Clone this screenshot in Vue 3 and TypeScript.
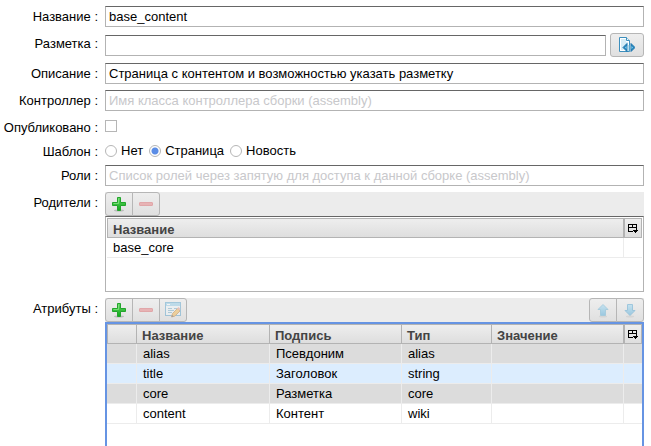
<script setup lang="ts">
import { ref } from 'vue'

interface Attribute {
  name: string
  caption: string
  type: string
  value: string
}

const name = ref('base_content')
const markup = ref('')
const description = ref('Страница с контентом и возможностью указать разметку')
const controller = ref('')
const published = ref(false)
const template = ref('page')
const roles = ref('')
const selected = ref('title')

const templates = [
  { id: 'none', label: 'Нет' },
  { id: 'page', label: 'Страница' },
  { id: 'news', label: 'Новость' },
]

const parents = ref<string[]>(['base_core'])

const attributes = ref<Attribute[]>([
  { name: 'alias', caption: 'Псевдоним', type: 'alias', value: '' },
  { name: 'title', caption: 'Заголовок', type: 'string', value: '' },
  { name: 'core', caption: 'Разметка', type: 'core', value: '' },
  { name: 'content', caption: 'Контент', type: 'wiki', value: '' },
])
</script>

<template>
  <svg class="defs" aria-hidden="true">
    <defs>
      <linearGradient id="green" x1="0" y1="0" x2="0" y2="1">
        <stop offset="0" stop-color="#5fd45f" />
        <stop offset="1" stop-color="#12a81c" />
      </linearGradient>
      <linearGradient id="blue" x1="0" y1="0" x2="0" y2="1">
        <stop offset="0" stop-color="#8fd6f5" />
        <stop offset="1" stop-color="#2f9fdb" />
      </linearGradient>
      <symbol id="plus" viewBox="0 0 16 16">
        <ellipse cx="8" cy="14.5" rx="5" ry="1" fill="#000" opacity=".18" />
        <path d="M6.5 1.5h3v5h5v3h-5v5h-3v-5h-5v-3h5z" fill="url(#green)" stroke="#22a52c" stroke-linejoin="round" />
        <path d="M7.5 2.5v5h-5" fill="none" stroke="#8fe88c" opacity=".7" />
      </symbol>
      <symbol id="minus" viewBox="0 0 16 16">
        <rect x="1.5" y="6.5" width="13" height="3" rx=".5" fill="#e9686c" stroke="#d9484e" />
      </symbol>
      <symbol id="arrow-up" viewBox="0 0 16 16">
        <ellipse cx="8" cy="14.5" rx="4" ry="1" fill="#000" opacity=".15" />
        <path d="M8 2.5l5 5h-2.5v6h-5v-6H3z" fill="url(#blue)" stroke="#4aa6d2" stroke-linejoin="round" />
      </symbol>
      <symbol id="arrow-down" viewBox="0 0 16 16">
        <ellipse cx="8" cy="14.5" rx="4" ry="1" fill="#000" opacity=".15" />
        <path d="M8 13.5l5-5h-2.5v-6h-5v6H3z" fill="url(#blue)" stroke="#2f94cc" stroke-linejoin="round" />
      </symbol>
      <symbol id="picker" viewBox="0 0 10 10">
        <path d="M0 0h9v1H0zM0 3h9v1H0zM0 0h1v8H0zM4 0h1v4H4zM8 0h1v6H8zM0 7h5v1H0zM5 6h5v1H5zM6 7h3v1H6zM7 8h1v1H7z" fill="#000" shape-rendering="crispEdges" />
      </symbol>
    </defs>
  </svg>

  <form class="form" @submit.prevent>
    <div class="field">
      <label class="label" for="name">Название :</label>
      <input id="name" v-model="name" class="text" type="text">
    </div>
    <div class="field">
      <label class="label" for="markup">Разметка :</label>
      <div class="with-button">
        <input id="markup" v-model="markup" class="text" type="text">
        <button class="button code" type="button" aria-label="Разметка">
          <svg class="icon" viewBox="0 0 16 16">
            <path d="M.5.5h7l3 3v11H.5z" fill="#fff" stroke="#3d8fbd" />
            <path d="M2 2h5v3h2v3L4 13H2z" fill="#d5ecf6" />
            <path d="M7.5.5v3h3" fill="#eaf7fc" stroke="#3d8fbd" />
            <path d="M8 6.5v8L4 10.5zM12 6.5v8l4-4z" fill="#2584bb" stroke="#2078b0" stroke-linejoin="round" />
            <path d="M7.5 9v3L6 10.5zM12.5 9v3l1.500-1.500z" fill="#8bd8f7" />
            <path d="M9.500 8h1v6h-1z" fill="#6fbbe0" />
          </svg>
        </button>
      </div>
    </div>
    <div class="field">
      <label class="label" for="description">Описание :</label>
      <input id="description" v-model="description" class="text" type="text">
    </div>
    <div class="field">
      <label class="label" for="controller">Контроллер :</label>
      <input id="controller" v-model="controller" class="text" type="text" placeholder="Имя класса контроллера сборки (assembly)">
    </div>
    <div class="field">
      <label class="label" for="published">Опубликовано :</label>
      <input id="published" v-model="published" class="check" type="checkbox">
    </div>
    <div class="field" role="radiogroup" aria-labelledby="template-label">
      <span id="template-label" class="label">Шаблон :</span>
      <div class="radios">
        <label v-for="t in templates" :key="t.id" class="option">
          <input v-model="template" class="radio" type="radio" name="template" :value="t.id">
          {{ t.label }}
        </label>
      </div>
    </div>
    <div class="field">
      <label class="label" for="roles">Роли :</label>
      <input id="roles" v-model="roles" class="text" type="text" placeholder="Список ролей через запятую для доступа к данной сборке (assembly)">
    </div>

    <div class="field">
      <span id="parents-label" class="label">Родители :</span>
      <div class="panel">
        <div class="toolbar">
          <div class="group">
            <button class="button" type="button" aria-label="Добавить"><svg class="icon"><use href="#plus" /></svg></button>
            <button class="button" type="button" aria-label="Удалить" disabled><svg class="icon"><use href="#minus" /></svg></button>
          </div>
        </div>
        <div class="frame parents">
          <table class="table" aria-labelledby="parents-label">
            <colgroup><col><col class="col-picker"></colgroup>
            <thead>
              <tr>
                <th>Название</th>
                <th class="picker-cell"><button class="picker" type="button" aria-label="Столбцы"><svg class="picker-icon"><use href="#picker" /></svg></button></th>
              </tr>
            </thead>
            <tbody>
              <tr v-for="p in parents" :key="p"><td>{{ p }}</td><td></td></tr>
            </tbody>
          </table>
        </div>
      </div>
    </div>

    <div class="field grow">
      <span id="attributes-label" class="label">Атрибуты :</span>
      <div class="panel">
        <div class="toolbar">
          <div class="group">
            <button class="button" type="button" aria-label="Добавить"><svg class="icon"><use href="#plus" /></svg></button>
            <button class="button" type="button" aria-label="Удалить" disabled><svg class="icon"><use href="#minus" /></svg></button>
            <button class="button" type="button" aria-label="Изменить" disabled>
              <svg class="icon" viewBox="0 0 16 16">
                <rect x=".5" y=".5" width="15" height="13" fill="#eef8fd" stroke="#3a93c4" />
                <path d="M1 1h14v3H1z" fill="#7cc4e8" />
                <path d="M2 2.500h3" stroke="#fff" />
                <path d="M3 6.500h4M3 8.500h6M3 10.500h4M9 6.500h4" stroke="#5b9fc2" />
                <path d="M6.500 15l1-3.500 5-5 2.500 2.500-5 5z" fill="#f7ad2c" stroke="#b8701c" stroke-linejoin="round" />
                <path d="M12 6.500l1.500-1.500 2 2L14 8.500z" fill="#e58a7a" />
                <path d="M6.500 15l.7-2 1.500 1.500z" fill="#333" />
              </svg>
            </button>
          </div>
          <div class="group">
            <button class="button" type="button" aria-label="Вверх" disabled><svg class="icon"><use href="#arrow-up" /></svg></button>
            <button class="button" type="button" aria-label="Вниз" disabled><svg class="icon"><use href="#arrow-down" /></svg></button>
          </div>
        </div>
        <div class="frame focused">
          <table class="table striped" aria-labelledby="attributes-label">
            <colgroup>
              <col class="col-mark"><col class="col-name"><col class="col-caption"><col class="col-type"><col><col class="col-picker">
            </colgroup>
            <thead>
              <tr>
                <th></th>
                <th>Название</th>
                <th>Подпись</th>
                <th>Тип</th>
                <th>Значение</th>
                <th class="picker-cell"><button class="picker" type="button" aria-label="Столбцы"><svg class="picker-icon"><use href="#picker" /></svg></button></th>
              </tr>
            </thead>
            <tbody>
              <tr v-for="a in attributes" :key="a.name" :class="{ selected: a.name === selected }" @click="selected = a.name">
                <td></td>
                <td>{{ a.name }}</td>
                <td>{{ a.caption }}</td>
                <td>{{ a.type }}</td>
                <td>{{ a.value }}</td>
                <td></td>
              </tr>
            </tbody>
          </table>
        </div>
      </div>
    </div>
  </form>
</template>

<style>
body {
  margin: 0;
  background: #fff;
}
</style>

<style scoped>
.defs {
  position: absolute;
  width: 0;
  height: 0;
}
.form {
  box-sizing: border-box;
  min-height: 100vh;
  display: flex;
  flex-direction: column;
  gap: 6px;
  padding: 6px 7px 0 0;
  font: 13px/15px "Liberation Sans", Arial, sans-serif;
  color: #000;
}
.field {
  display: grid;
  grid-template-columns: 98px minmax(0, 1fr);
  column-gap: 7px;
  align-items: start;
}
.grow {
  flex: 1;
  align-items: stretch;
}
.label {
  padding-top: 3px;
  text-align: right;
  white-space: nowrap;
}
.text {
  box-sizing: border-box;
  width: 100%;
  height: 21px;
  margin: 0;
  padding: 2px 3px;
  border: 1px solid #b3b3b3;
  border-top-color: #666;
  border-radius: 0;
  background: #fff;
  font: inherit;
  color: inherit;
  outline: none;
}
.text::placeholder {
  color: #c8c8cb;
  opacity: 1;
}
.with-button {
  display: flex;
  align-items: center;
  gap: 4px;
}
.with-button .text {
  flex: 1;
  min-width: 0;
}
.button {
  box-sizing: border-box;
  display: block;
  width: 28px;
  height: 24px;
  margin: 0;
  padding: 3px 5px;
  border: 1px solid #b6b6b6;
  background: linear-gradient(#eeeeee, #e0e0e0);
}
.button:disabled .icon {
  opacity: 0.4;
}
.code {
  width: 34px;
  padding: 3px 8px;
  border-radius: 3px;
}
.icon {
  display: block;
  width: 16px;
  height: 16px;
}
.check,
.radio {
  appearance: none;
  box-sizing: border-box;
  width: 12px;
  height: 12px;
  margin: 0;
  border: 1px solid #b6b6b6;
  background: #fff;
}
.check {
  margin-top: 3px;
}
.check:checked {
  background: #6694e3;
}
.radio {
  border-radius: 50%;
}
.radio:checked {
  background: radial-gradient(circle, #5b8de6 3px, #fff 4px);
}
.radios {
  display: flex;
  gap: 6px;
  padding-top: 2px;
}
.option {
  display: flex;
  align-items: center;
  gap: 4px;
}
.panel {
  display: flex;
  flex-direction: column;
}
.toolbar {
  display: flex;
  justify-content: space-between;
  background: #ececec;
}
.group {
  display: flex;
}
.group .button + .button {
  margin-left: -1px;
}
.group .button:first-child {
  border-radius: 3px 0 0 3px;
}
.group .button:last-child {
  border-radius: 0 3px 3px 0;
}
.frame {
  box-sizing: border-box;
  padding: 1px;
  border: 1px solid #b3b3b3;
  border-top-color: #666;
}
.parents {
  min-height: 76px;
}
.focused {
  flex: 1;
  padding: 0;
  border: 2px solid #6694e3;
  border-bottom: 0;
}
.table {
  width: 100%;
  table-layout: fixed;
  border-collapse: separate;
  border-spacing: 0;
}
.col-mark {
  width: 30px;
}
.col-name {
  width: 133px;
}
.col-caption {
  width: 132px;
}
.col-type {
  width: 90px;
}
.col-picker {
  width: 18px;
}
th {
  box-sizing: border-box;
  height: 20px;
  padding: 3px 5px 0;
  border: 1px solid #b3b3b3;
  border-left: 0;
  background: linear-gradient(#eeeeee, #dedede);
  color: #444;
  font-weight: bold;
  text-align: left;
  white-space: nowrap;
}
th:first-child,
th:last-child {
  border-left: 1px solid #b3b3b3;
}
.picker-cell {
  padding: 0;
}
.picker {
  display: block;
  width: 16px;
  height: 18px;
  margin: 0;
  padding: 5px 3px 3px;
  border: 0;
  background: none;
}
.picker-icon {
  display: block;
  width: 10px;
  height: 10px;
}
td {
  box-sizing: border-box;
  height: 20px;
  padding: 2px 6px;
  border-right: 1px solid #ececec;
  border-bottom: 1px solid #ececec;
  white-space: nowrap;
}
td:last-child {
  border-right: 0;
}
.striped tbody tr:nth-child(odd) {
  background: #dcdcdc;
}
.striped tbody tr.selected {
  background: #dcedfe;
}
</style>
